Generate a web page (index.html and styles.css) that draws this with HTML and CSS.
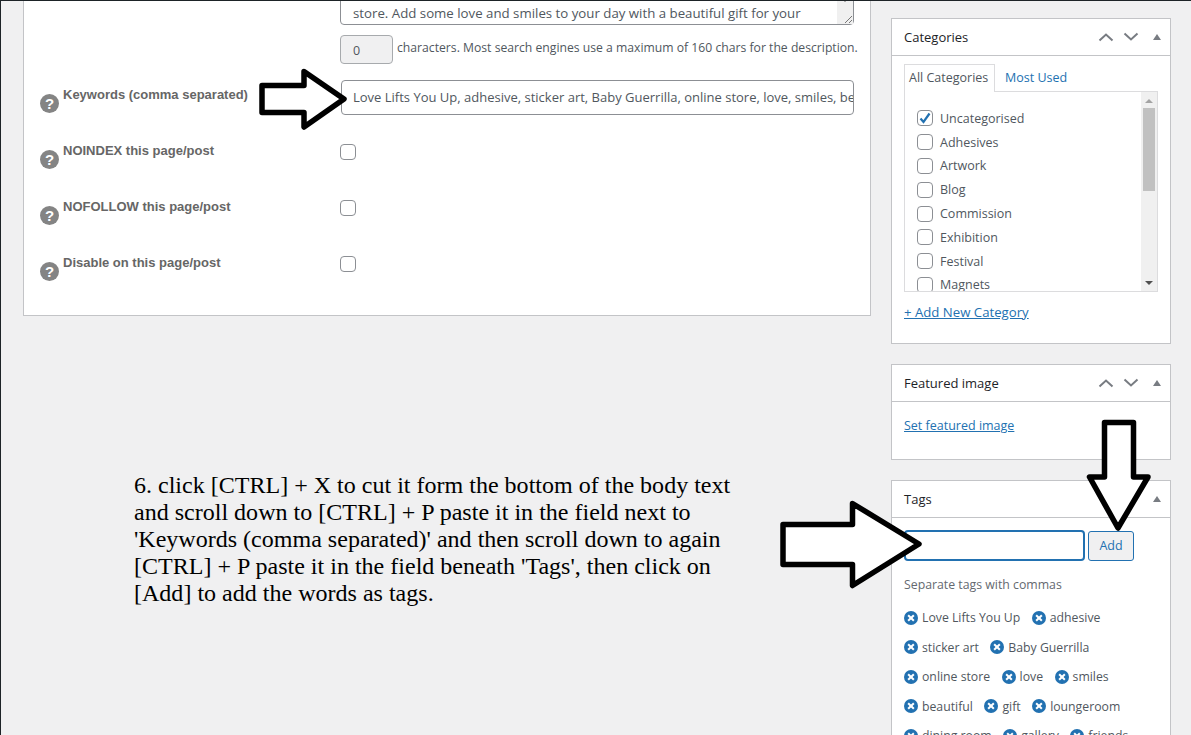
FILE: index.html
```html
<!DOCTYPE html>
<html lang="en">
<head>
    <meta charset="UTF-8">
    <meta name="viewport" content="width=device-width, initial-scale=1.0">
    <title>Edit Post</title>
    <link rel="stylesheet" href="styles.css">
</head>
<body>
    <div class="page">
        <div class="main-col">
            <div class="seo-card">
                <div class="seo-row seo-row-top">
                    <div class="label-col"></div>
                    <div class="field-col">
                        <div class="desc-box">
                            <span class="desc-text">store. Add some love and smiles to your day with a beautiful gift for your</span>
                            <div class="desc-scroll">
                                <svg class="scroll-arrow" width="8" height="5" viewBox="0 0 8 5"><path d="M0 0H8L4 5z" fill="#505050"/></svg>
                                <svg class="resize-grip" width="10" height="10" viewBox="0 0 10 10"><path d="M9 2 2 9M9 6 6 9" stroke="#777" fill="none"/></svg>
                            </div>
                        </div>
                        <div class="count-line">
                            <span class="count-box">0</span>
                            <span class="count-text">characters. Most search engines use a maximum of 160 chars for the description.</span>
                        </div>
                    </div>
                </div>

                <div class="seo-row">
                    <div class="label-col">
                        <span class="help-icon">?</span>
                        <span class="seo-label">Keywords (comma separated)</span>
                    </div>
                    <div class="field-col">
                        <div class="keyword-box">Love Lifts You Up, adhesive, sticker art, Baby Guerrilla, online store, love, smiles, beautiful, gift</div>
                    </div>
                </div>

                <div class="seo-row">
                    <div class="label-col">
                        <span class="help-icon">?</span>
                        <span class="seo-label">NOINDEX this page/post</span>
                    </div>
                    <div class="field-col"><span class="check seo-check"></span></div>
                </div>

                <div class="seo-row">
                    <div class="label-col">
                        <span class="help-icon">?</span>
                        <span class="seo-label">NOFOLLOW this page/post</span>
                    </div>
                    <div class="field-col"><span class="check seo-check"></span></div>
                </div>

                <div class="seo-row">
                    <div class="label-col">
                        <span class="help-icon">?</span>
                        <span class="seo-label">Disable on this page/post</span>
                    </div>
                    <div class="field-col"><span class="check seo-check"></span></div>
                </div>
            </div>

            <p class="instructions">6. click [CTRL] + X to cut it form the bottom of the body text and scroll down to [CTRL] + P paste it in the field next to 'Keywords (comma separated)' and then scroll down to again [CTRL] + P paste it in the field beneath 'Tags', then click on [Add] to add the words as tags.</p>
        </div>

        <div class="side-col">
            <div class="box box-categories">
                <div class="box-head">
                    <h2>Categories</h2>
                    <svg class="head-icon" width="16" height="10" viewBox="0 0 16 10"><path d="M1.500 8.500 8 2.500l6.500 6" stroke="#787c82" stroke-width="2" fill="none"/></svg>
                    <svg class="head-icon" width="16" height="10" viewBox="0 0 16 10"><path d="M1.500 1.500 8 7.500l6.500-6" stroke="#787c82" stroke-width="2" fill="none"/></svg>
                    <svg class="head-toggle" width="8" height="6" viewBox="0 0 8 6"><path d="M4 0 8 6H0z" fill="#787c82"/></svg>
                </div>
                <div class="box-body">
                    <div class="tabs">
                        <span class="tab tab-active">All Categories</span>
                        <span class="tab tab-link">Most Used</span>
                    </div>
                    <div class="cat-panel">
                        <div class="cat-list">
                            <div class="cat-item"><span class="check check-on"><svg width="14" height="14" viewBox="0 0 14 14"><path d="M2.500 7.500 5.500 11 11.500 2.500" stroke="#2271b1" stroke-width="2.200" fill="none"/></svg></span>Uncategorised</div>
                            <div class="cat-item"><span class="check"></span>Adhesives</div>
                            <div class="cat-item"><span class="check"></span>Artwork</div>
                            <div class="cat-item"><span class="check"></span>Blog</div>
                            <div class="cat-item"><span class="check"></span>Commission</div>
                            <div class="cat-item"><span class="check"></span>Exhibition</div>
                            <div class="cat-item"><span class="check"></span>Festival</div>
                            <div class="cat-item"><span class="check"></span>Magnets</div>
                        </div>
                        <div class="scrollbar">
                            <svg width="10" height="6" viewBox="0 0 10 6"><path d="M5 1 9 5H1z" fill="#a3a3a3"/></svg>
                            <div class="scroll-thumb"></div>
                            <svg class="scroll-down" width="10" height="6" viewBox="0 0 10 6"><path d="M1 1H9L5 5z" fill="#505050"/></svg>
                        </div>
                    </div>
                    <a class="box-link add-cat" href="#">+ Add New Category</a>
                </div>
            </div>

            <div class="box box-featured">
                <div class="box-head">
                    <h2>Featured image</h2>
                    <svg class="head-icon" width="16" height="10" viewBox="0 0 16 10"><path d="M1.500 8.500 8 2.500l6.500 6" stroke="#787c82" stroke-width="2" fill="none"/></svg>
                    <svg class="head-icon" width="16" height="10" viewBox="0 0 16 10"><path d="M1.500 1.500 8 7.500l6.500-6" stroke="#787c82" stroke-width="2" fill="none"/></svg>
                    <svg class="head-toggle" width="8" height="6" viewBox="0 0 8 6"><path d="M4 0 8 6H0z" fill="#787c82"/></svg>
                </div>
                <div class="box-body">
                    <a class="box-link" href="#">Set featured image</a>
                </div>
            </div>

            <div class="box box-tags">
                <div class="box-head">
                    <h2>Tags</h2>
                    <svg class="head-toggle" width="8" height="6" viewBox="0 0 8 6"><path d="M4 0 8 6H0z" fill="#787c82"/></svg>
                </div>
                <div class="box-body">
                    <div class="tag-form">
                        <div class="tag-input"></div>
                        <div class="tag-add">Add</div>
                    </div>
                    <p class="tag-hint">Separate tags with commas</p>
                    <ul class="tag-list">
                        <li><span class="tag-x"></span>Love Lifts You Up</li>
                        <li><span class="tag-x"></span>adhesive</li>
                        <li><span class="tag-x"></span>sticker art</li>
                        <li><span class="tag-x"></span>Baby Guerrilla</li>
                        <li><span class="tag-x"></span>online store</li>
                        <li><span class="tag-x"></span>love</li>
                        <li><span class="tag-x"></span>smiles</li>
                        <li><span class="tag-x"></span>beautiful</li>
                        <li><span class="tag-x"></span>gift</li>
                        <li><span class="tag-x"></span>loungeroom</li>
                        <li><span class="tag-x"></span>dining room</li>
                        <li><span class="tag-x"></span>gallery</li>
                        <li><span class="tag-x"></span>friends</li>
                    </ul>
                </div>
            </div>
        </div>

        <!-- hand drawn arrows over the screenshot -->
        <svg class="arrows" width="1191" height="735" viewBox="0 0 1191 735">
            <path class="arrow" d="M262 85.500H304V71.500L344 99 304 127V112.500H262Z"/>
            <path class="arrow" d="M783 524.500H852.500V503.500L919 544 852.500 585.500V564.500H783Z"/>
            <path class="arrow" d="M1104.500 422.500H1133.500V477H1148L1118 528 1089.500 477H1104.500Z"/>
        </svg>
    </div>
</body>
</html>
```

FILE: styles.css
```css
* {
    box-sizing: border-box;
}

html, body {
    margin: 0;
    padding: 0;
}

body {
    width: 1191px;
    height: 735px;
    overflow: hidden;
    background-color: #f0f0f1;
    font-family: 'Open Sans', sans-serif;
    font-size: 12.500px;
    color: #50575e;
}

.page {
    position: relative;
    display: grid;
    grid-template-columns: 848px 280px;
    column-gap: 20px;
    height: 735px;
    padding-left: 22px;
    border-top: 1px solid #1d2327;
    border-left: 1px solid #1d2327;
    overflow: hidden;
}

/* left column */
.seo-card {
    height: 315px;
    background-color: #fff;
    border: 1px solid #c3c4c7;
    border-top: none;
    overflow: hidden;
}

.seo-row {
    display: flex;
    height: 56px;
}

.seo-row-top {
    height: 77px;
}

.label-col {
    display: flex;
    align-items: flex-start;
    width: 316px;
    padding-left: 16px;
}

.field-col {
    width: 516px;
}

.help-icon {
    flex: none;
    width: 19px;
    height: 19px;
    margin-top: 16px;
    border-radius: 50%;
    background-color: #848484;
    color: #fff;
    font-family: 'Liberation Sans', sans-serif;
    font-size: 15px;
    font-weight: bold;
    line-height: 19px;
    text-align: center;
}

.seo-label {
    margin: 9px 0 0 4px;
    font-family: 'Liberation Sans', sans-serif;
    font-size: 13px;
    font-weight: bold;
    line-height: 16px;
    color: #666;
}

.desc-box {
    position: relative;
    width: 514px;
    height: 54px;
    margin-top: -30px;
    padding: 32px 0 0 12px;
    background-color: #fff;
    border: 1px solid #8c8f94;
    border-radius: 4px;
    font-size: 13.250px;
    line-height: 18px;
    white-space: nowrap;
}

.desc-scroll {
    position: absolute;
    top: 0;
    right: 0;
    bottom: 0;
    width: 16px;
    background-color: #f0f0f0;
}

.scroll-arrow {
    position: absolute;
    left: 4px;
    bottom: 22px;
}

.resize-grip {
    position: absolute;
    right: 0;
    bottom: 0;
}

.count-line {
    display: flex;
    align-items: flex-start;
    margin-top: 10px;
}

.count-box {
    flex: none;
    width: 53px;
    height: 29px;
    padding-left: 12px;
    background-color: #f0f0f1;
    border: 1px solid #a7aaad;
    border-radius: 4px;
    line-height: 29px;
}

.count-text {
    margin-left: 4px;
    font-size: 12.200px;
    line-height: 26px;
    white-space: nowrap;
}

.keyword-box {
    width: 513px;
    height: 35px;
    margin: 2px 0 0 1px;
    padding-left: 11px;
    background-color: #fff;
    border: 1px solid #8c8f94;
    border-radius: 4px;
    font-size: 13px;
    line-height: 33px;
    white-space: nowrap;
    overflow: hidden;
}

.check {
    display: inline-block;
    flex: none;
    width: 16px;
    height: 16px;
    background-color: #fff;
    border: 1px solid #8c8f94;
    border-radius: 4px;
}

.seo-check {
    margin-top: 10px;
}

.check-on svg {
    display: block;
    margin: 0;
}

.instructions {
    width: 600px;
    margin: 156px 0 0 111px;
    font-family: 'Liberation Serif', serif;
    font-size: 24.040px;
    line-height: 27px;
    color: #000;
}

/* sidebar */
.side-col {
    padding-top: 17px;
}

.box {
    background-color: #fff;
    border: 1px solid #c3c4c7;
    margin-bottom: 20px;
}

.box-categories {
    height: 326px;
}

.box-featured {
    height: 96px;
}

.box-tags {
    height: 300px;
}

.box-head {
    display: flex;
    align-items: center;
    height: 37px;
    padding: 0 9px 0 12px;
    border-bottom: 1px solid #c3c4c7;
}

.box-head h2 {
    flex: 1;
    margin: 0;
    font-size: 13px;
    font-weight: 500;
    color: #1d2327;
}

.head-icon {
    margin-right: 9px;
}

.head-toggle {
    margin-left: 5px;
}

.box-body {
    padding: 8px 12px 0;
}

.tabs {
    display: flex;
    height: 28px;
}

.tab {
    height: 28px;
    padding: 0 4px;
    line-height: 26px;
}

.tab-active {
    width: 91px;
    background-color: #fff;
    border: 1px solid #dcdcde;
    border-bottom: none;
    position: relative;
    z-index: 1;
}

.tab-link {
    margin-left: 6px;
    padding-top: 1px;
    color: #2271b1;
}

.cat-panel {
    display: flex;
    width: 254px;
    height: 201px;
    margin-top: -1px;
    border: 1px solid #dcdcde;
    overflow: hidden;
}

.cat-list {
    flex: 1;
    padding: 14.500px 0 0 12px;
}

.cat-item {
    display: flex;
    align-items: center;
    gap: 7px;
    height: 23.800px;
    white-space: nowrap;
}

.scrollbar {
    position: relative;
    width: 16px;
    background-color: #f0f0f0;
    padding: 6px 3px 0;
}

.scrollbar svg {
    display: block;
}

.scroll-thumb {
    width: 12px;
    height: 83px;
    margin: 4px 0 0 -1px;
    background-color: #c1c1c1;
}

.scroll-down {
    position: absolute;
    left: 3px;
    bottom: 5px;
}

.box-link {
    color: #2271b1;
    text-decoration: underline;
}

.add-cat {
    display: block;
    margin-top: 11px;
    font-size: 13.200px;
}

.box-featured .box-body {
    padding-top: 15px;
}

.tag-form {
    display: flex;
    gap: 3px;
    margin-top: 4px;
}

.tag-input {
    width: 181px;
    height: 31px;
    background-color: #fff;
    border: 2px solid #2271b1;
    border-radius: 4px;
}

.tag-add {
    width: 46px;
    height: 30px;
    margin-top: 1px;
    background-color: #f0f0f1;
    border: 1px solid #2271b1;
    border-radius: 3px;
    color: #2271b1;
    line-height: 28px;
    text-align: center;
}

.tag-hint {
    margin: 15px 0 0;
    font-size: 12.300px;
    line-height: 18px;
    color: #646970;
}

.tag-list {
    display: flex;
    flex-wrap: wrap;
    column-gap: 11.500px;
    margin: 9px 0 0;
    padding: 0;
    font-size: 12.250px;
    list-style: none;
}

.tag-list li {
    display: flex;
    align-items: center;
    height: 29.500px;
    white-space: nowrap;
}

.tag-x {
    position: relative;
    width: 14px;
    height: 14px;
    margin: 0 4px 0 0;
    border-radius: 50%;
    background-color: #2271b1;
}

.tag-x::before,
.tag-x::after {
    content: "";
    position: absolute;
    top: 6px;
    left: 3px;
    width: 8px;
    height: 2px;
    background-color: #fff;
    transform: rotate(45deg);
}

.tag-x::after {
    transform: rotate(-45deg);
}

/* arrows */
.arrows {
    position: absolute;
    top: -1px;
    left: -1px;
    pointer-events: none;
}

.arrow {
    fill: #fff;
    stroke: #000;
    stroke-width: 5.500;
    stroke-linejoin: round;
}
```
